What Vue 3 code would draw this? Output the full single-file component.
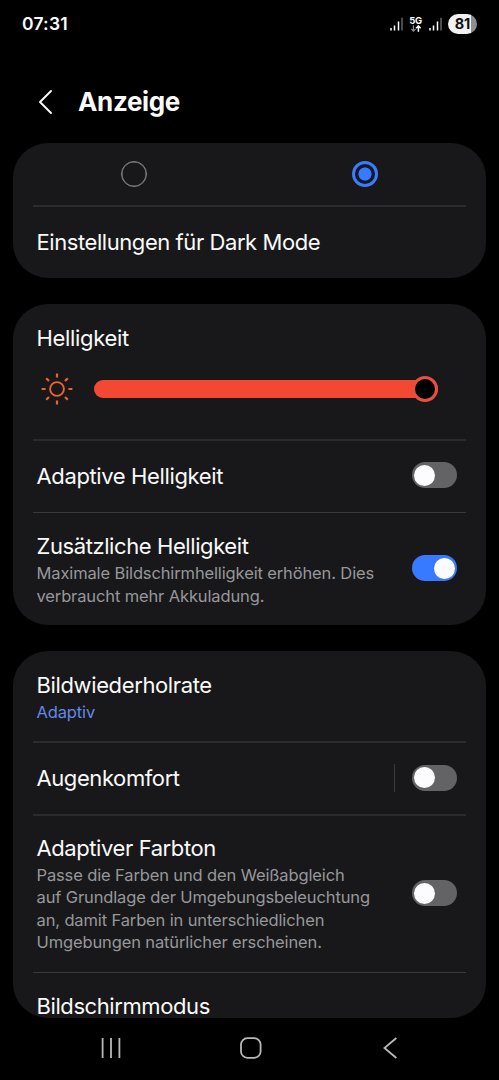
<script setup>
import { ref } from 'vue'

const darkMode = ref(true)
const brightness = ref(100)
const adaptiveBrightness = ref(false)
const extraBrightness = ref(true)
const eyeComfort = ref(false)
const adaptiveTone = ref(false)
</script>

<template>
	<div class="screen">
		<div class="status-bar">
			<span class="time">07:31</span>
			<div class="status-icons">
				<svg class="signal" width="14" height="14" viewBox="0 0 14 14">
					<path d="M1 11v2.5M4.5 8.5v5M8.5 4.5v9" stroke="#fff" stroke-width="1.5" />
					<path d="M12 .8v12.7" stroke="#6b6b6b" stroke-width="1.4" />
				</svg>
				<div class="network">
					<span>5G</span>
					<svg width="12" height="7" viewBox="0 0 12 7" fill="none">
						<path d="M3.4 0.3v5.8M1.2 3.9l2.2 2.3 2.2-2.3" stroke="#8c8c8c" stroke-width="1.2" />
						<path d="M8.4 6.7V0.9M6.1 3.2l2.3-2.3 2.3 2.3" stroke="#fff" stroke-width="1.5" />
					</svg>
				</div>
				<svg class="signal" width="14" height="14" viewBox="0 0 14 14">
					<path d="M1 11v2.5M4.5 8.5v5M8.5 4.5v9" stroke="#fff" stroke-width="1.5" />
					<path d="M12 .8v12.7" stroke="#6b6b6b" stroke-width="1.4" />
				</svg>
				<span class="battery">81</span>
			</div>
		</div>

		<header class="header">
			<svg width="14" height="26" viewBox="0 0 14 26" fill="none" aria-label="Zurück">
				<path d="M13 2L2 13l11 11" stroke="#fafafa" stroke-width="1.9" stroke-linecap="round" stroke-linejoin="round" />
			</svg>
			<h1>Anzeige</h1>
		</header>

		<main>
			<section class="card card-mode">
				<div class="radios">
					<button class="radio" :class="{ checked: !darkMode }" aria-label="Hell" @click="darkMode = false"></button>
					<button class="radio" :class="{ checked: darkMode }" aria-label="Dunkel" @click="darkMode = true"></button>
				</div>
				<div class="divider wide"></div>
				<div class="row row-dark">
					<span class="label l-dark">Einstellungen für Dark Mode</span>
				</div>
			</section>

			<section class="card card-brightness">
				<div class="brightness">
					<span class="label l-bright">Helligkeit</span>
					<div class="slider-row">
						<svg width="32" height="32" viewBox="0 0 32 32" fill="none" stroke="#ec642c" stroke-width="2.2">
							<circle cx="16" cy="16" r="6.9" stroke-width="1.9" />
							<path
								d="M16 .6v4M16 27.4v4M.6 16h4M27.4 16h4M5.2 5.2l2.8 2.8M24 24l2.8 2.8M5.2 26.8L8 24M24 8l2.8-2.8"
							/>
						</svg>
						<div class="slider">
							<div class="fill" :style="{ width: brightness + '%' }">
								<span class="thumb"></span>
							</div>
						</div>
					</div>
				</div>
				<div class="divider wide"></div>
				<div class="row row-adaptive">
					<span class="label l-adaptive">Adaptive Helligkeit</span>
					<button class="switch" :class="{ on: adaptiveBrightness }" @click="adaptiveBrightness = !adaptiveBrightness"></button>
				</div>
				<div class="divider"></div>
				<div class="row row-extra">
					<div class="text">
						<span class="label">Zusätzliche Helligkeit</span>
						<p>Maximale Bildschirmhelligkeit erhöhen. Dies<br />verbraucht mehr Akkuladung.</p>
					</div>
					<button class="switch" :class="{ on: extraBrightness }" @click="extraBrightness = !extraBrightness"></button>
				</div>
			</section>

			<section class="card card-screen">
				<div class="row row-rate">
					<div class="text">
						<span class="label l-rate">Bildwiederholrate</span>
						<p class="value">Adaptiv</p>
					</div>
				</div>
				<div class="divider wide"></div>
				<div class="row row-comfort">
					<span class="label">Augenkomfort</span>
					<div class="split">
						<button class="switch" :class="{ on: eyeComfort }" @click="eyeComfort = !eyeComfort"></button>
					</div>
				</div>
				<div class="divider wide"></div>
				<div class="row row-tone">
					<div class="text">
						<span class="label">Adaptiver Farbton</span>
						<p>
							Passe die Farben und den Weißabgleich<br />auf Grundlage der Umgebungsbeleuchtung<br />an, damit Farben
							in unterschiedlichen<br />Umgebungen natürlicher erscheinen.
						</p>
					</div>
					<button class="switch" :class="{ on: adaptiveTone }" @click="adaptiveTone = !adaptiveTone"></button>
				</div>
				<div class="divider"></div>
				<div class="row row-last">
					<span class="label l-mode">Bildschirmmodus</span>
				</div>
			</section>
		</main>

		<nav class="nav-bar">
			<svg width="22" height="22" viewBox="0 0 22 22" stroke="#b8b8b8" stroke-width="1.8">
				<path d="M2.6 1v20M11 1v20M19.4 1v20" />
			</svg>
			<svg width="22" height="22" viewBox="0 0 22 22" fill="none" stroke="#b8b8b8" stroke-width="1.8">
				<rect x="1" y="1.2" width="19.6" height="19.6" rx="6.4" />
			</svg>
			<svg width="22" height="22" viewBox="0 0 22 22" fill="none" stroke="#b8b8b8" stroke-width="1.8">
				<path d="M17.3 1L5.5 11l11.8 10" />
			</svg>
		</nav>
	</div>
</template>

<style>
body {
	margin: 0;
	background: #000;
}
</style>

<style scoped>
.screen {
	display: flex;
	flex-direction: column;
	width: 499px;
	height: 1080px;
	overflow: hidden;
	background: #000;
	color: #fafafa;
	font-family: Inter, 'Liberation Sans', sans-serif;
}

button {
	padding: 0;
	border: none;
	cursor: pointer;
}

.status-bar {
	display: flex;
	align-items: center;
	justify-content: space-between;
	box-sizing: border-box;
	height: 48px;
	padding: 0 22px;
}

.time {
	margin-top: -2px;
	font-size: 17.5px;
	font-weight: 600;
	letter-spacing: 0.2px;
}

.status-icons {
	display: flex;
	align-items: center;
}

.network {
	display: flex;
	flex-direction: column;
	align-items: center;
	width: 12px;
	margin: 0 7px 0 6px;
	font-size: 9.5px;
	font-weight: 700;
	letter-spacing: -0.4px;
	line-height: 9px;
}

.battery {
	width: 29px;
	height: 20px;
	margin-left: 5.5px;
	border-radius: 10px;
	background: linear-gradient(to right, #f2f2f2 79%, #8e8e8e 79%);
	color: #111;
	font-size: 14.5px;
	font-weight: 700;
	line-height: 20px;
	text-align: center;
}

.header {
	display: flex;
	align-items: center;
	height: 95px;
	padding: 0 38px;
}

.header svg {
	margin-top: 12px;
}

h1 {
	margin: 13px 0 0 26px;
	font-size: 26px;
	font-weight: 700;
	letter-spacing: -0.35px;
	line-height: 32px;
}

main {
	display: flex;
	flex-direction: column;
	gap: 26px;
	height: 875px;
	padding: 0 13px;
}

.card {
	display: flex;
	flex-direction: column;
	box-sizing: border-box;
	flex-shrink: 0;
	border-radius: 35px;
	background: #18181a;
	overflow: hidden;
}

.card-mode {
	height: 135px;
}

.card-brightness {
	height: 321px;
}

.card-screen {
	height: 367px;
}

.divider {
	flex-shrink: 0;
	height: 1px;
	margin: 0 20px;
	background: #39393b;
}

.divider.wide {
	height: 2px;
	background: #2b2b2d;
}

.radios {
	display: flex;
	align-items: center;
	justify-content: space-around;
	height: 62px;
	padding: 0 5px;
}

.radio {
	box-sizing: border-box;
	width: 26px;
	height: 26px;
	border: 1.5px solid #858587;
	border-radius: 50%;
	background: transparent;
	box-shadow: inset 0 0 0 0.5px #858587;
}

.radio.checked {
	border: 3px solid #3e7bf5;
	background: radial-gradient(circle, #387aff 6.2px, #101a2e 6.9px);
	box-shadow: none;
}

.row {
	display: flex;
	align-items: center;
	justify-content: space-between;
	box-sizing: border-box;
	flex-shrink: 0;
	padding: 0 29px 0 23.5px;
}

.row-dark {
	height: 71px;
	padding-bottom: 2px;
}

.row-adaptive {
	height: 71px;
	padding-bottom: 3px;
}

.row-extra {
	height: 112px;
}

.row-extra .text {
	padding-top: 2px;
}

.row-extra .switch {
	margin-bottom: 2px;
}

.row-rate {
	height: 90px;
	padding-top: 3px;
}

.row-comfort {
	height: 71px;
	padding-bottom: 2px;
}

.row-tone {
	height: 156px;
}

.row-tone .switch {
	margin-bottom: 2px;
}

.row-last {
	align-items: flex-start;
	height: 45px;
	padding-top: 23px;
}

.label {
	display: block;
	font-size: 22px;
	letter-spacing: -0.41px;
	line-height: 26px;
	white-space: nowrap;
}

.l-dark {
	letter-spacing: -0.43px;
}

.l-bright {
	letter-spacing: -0.33px;
}

.l-adaptive,
.l-rate {
	letter-spacing: -0.37px;
}

.l-adaptive {
	padding-top: 2px;
}

.l-mode {
	line-height: 20px;
}

p {
	margin: 3px 0 0;
	color: #97979a;
	font-size: 16.5px;
	letter-spacing: -0.13px;
	line-height: 22.5px;
	white-space: nowrap;
}

p.value {
	color: #6389e6;
}

.brightness {
	box-sizing: border-box;
	height: 135px;
	padding: 21px 0 0 23.5px;
}

.slider-row {
	display: flex;
	align-items: center;
	height: 32px;
	margin: 22px 0 0 4.5px;
}

.slider {
	width: 344.5px;
	height: 18px;
	margin-left: 20.5px;
	border-radius: 9px;
	background: #3a2623;
}

.fill {
	position: relative;
	height: 18px;
	border-radius: 9px;
	background: #f34831;
}

.thumb {
	position: absolute;
	top: -4px;
	right: 0;
	box-sizing: border-box;
	width: 26px;
	height: 26px;
	border: 3px solid #e94f3e;
	border-radius: 50%;
	background: #000;
}

.switch {
	display: flex;
	align-items: center;
	flex-shrink: 0;
	box-sizing: border-box;
	width: 45px;
	height: 26px;
	padding: 0 2px;
	border-radius: 13px;
	background: #636366;
}

.switch::before {
	content: '';
	width: 21px;
	height: 21px;
	border-radius: 50%;
	background: #fcfcff;
}

.switch.on {
	justify-content: flex-end;
	background: #387aff;
}

.split {
	display: flex;
	align-items: center;
	height: 28px;
	padding-left: 17px;
	border-left: 1px solid #39393b;
}

.nav-bar {
	display: flex;
	align-items: center;
	justify-content: space-between;
	flex-shrink: 0;
	height: 60px;
	padding: 0 98px 0 100px;
}
</style>
